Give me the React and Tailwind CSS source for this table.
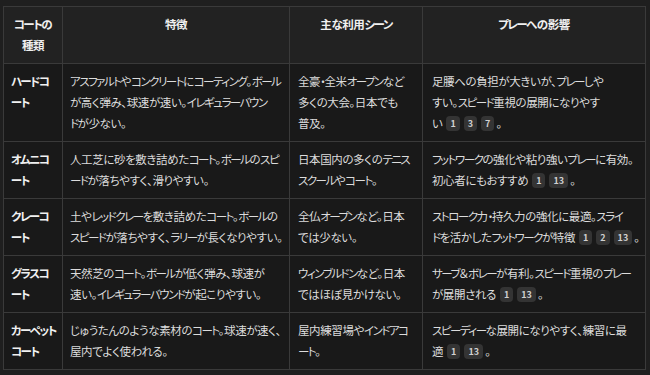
import React from "react";

const heads = [["コートの", "種類"], ["特徴"], ["主な利用シーン"], ["プレーへの影響"]];

const rows = [
  {
    name: ["ハードコ", "ート"],
    feat: ["アスファルトやコンクリートにコーティング。ボール", "が高く弾み、球速が速い。イレギュラーバウン", "ドが少ない。"],
    use: ["全豪・全米オープンなど", "多くの大会。日本でも", "普及。"],
    play: ["足腰への負担が大きいが、プレーしや", "すい。スピード重視の展開になりやす", "い"],
    refs: ["1", "3", "7"],
  },
  {
    name: ["オムニコ", "ート"],
    feat: ["人工芝に砂を敷き詰めたコート。ボールのスピ", "ードが落ちやすく、滑りやすい。"],
    use: ["日本国内の多くのテニス", "スクールやコート。"],
    play: ["フットワークの強化や粘り強いプレーに有効。", "初心者にもおすすめ"],
    refs: ["1", "13"],
  },
  {
    name: ["クレーコ", "ート"],
    feat: ["土やレッドクレーを敷き詰めたコート。ボールの", "スピードが落ちやすく、ラリーが長くなりやすい。"],
    use: ["全仏オープンなど。日本", "では少ない。"],
    play: ["ストローク力・持久力の強化に最適。スライ", "ドを活かしたフットワークが特徴"],
    refs: ["1", "2", "13"],
  },
  {
    name: ["グラスコ", "ート"],
    feat: ["天然芝のコート。ボールが低く弾み、球速が", "速い。イレギュラーバウンドが起こりやすい。"],
    use: ["ウィンブルドンなど。日本", "ではほぼ見かけない。"],
    play: ["サーブ＆ボレーが有利。スピード重視のプレー", "が展開される"],
    refs: ["1", "13"],
  },
  {
    name: ["カーペット", "コート"],
    feat: ["じゅうたんのような素材のコート。球速が速く、", "屋内でよく使われる。"],
    use: ["屋内練習場やインドアコ", "ート。"],
    play: ["スピーディーな展開になりやすく、練習に最", "適"],
    refs: ["1", "13"],
  },
];

// katakana in the screenshot's UI font is much narrower than in Noto, so tighten those runs
function Text({ s }) {
  const parts = s.split(/([\u30A0-\u30FF]+)/);
  return parts.map((p, i) =>
    /^[\u30A0-\u30FF]+$/.test(p) ? (
      <span key={i} className="tracking-[-1.5px]">{p}</span>
    ) : (
      <span key={i}>{p}</span>
    )
  );
}

function Lines({ lines }) {
  return lines.map((l, i) => (
    <div key={i} className="whitespace-nowrap">
      <Text s={l} />
    </div>
  ));
}

function Badge({ n }) {
  return (
    <span className="inline-flex items-center justify-center h-[15px] min-w-[13px] px-[4px] ml-[4px] rounded-[4px] bg-[#343434] text-[9px] font-bold leading-none tracking-normal text-[#d0d0d0] align-[1px]">
      {n}
    </span>
  );
}

export default function App() {
  return (
    <div
      className="w-[650px] h-[375px] bg-[#1f1f1f] pl-[3px] pt-[6px] text-[#dcdcdc] [font-feature-settings:'palt'] overflow-hidden"
      style={{ fontFamily: '"Noto Sans CJK JP", "Noto Sans", sans-serif' }}
    >
      <table className="table-fixed border-collapse w-[642px] text-[11.5px] leading-[21px] tracking-[-0.4px]">
        <colgroup>
          <col className="w-[59px]" />
          <col className="w-[227px]" />
          <col className="w-[133px]" />
          <col className="w-[223px]" />
        </colgroup>
        <thead>
          <tr className="bg-[#222222]">
            {heads.map((h, i) => (
              <th key={i} className="border border-[#3a3a3a] px-2 py-[7px] align-top text-center font-bold text-[#f0f0f0]">
                <Lines lines={h} />
              </th>
            ))}
          </tr>
        </thead>
        <tbody>
          {rows.map((r, i) => (
            <tr key={i} className="bg-[#191919]">
              <td className="border border-[#3a3a3a] pl-[7px] pr-1 py-[7px] align-top font-bold text-[#f0f0f0]">
                <Lines lines={r.name} />
              </td>
              <td className="border border-[#3a3a3a] px-[7px] py-[7px] align-top">
                <Lines lines={r.feat} />
              </td>
              <td className="border border-[#3a3a3a] px-[8px] py-[7px] align-top">
                <Lines lines={r.use} />
              </td>
              <td className="border border-[#3a3a3a] px-[9px] py-[7px] align-top">
                <Lines lines={r.play.slice(0, -1)} />
                <div className="whitespace-nowrap">
                  <Text s={r.play[r.play.length - 1]} />
                  {r.refs.map((n, j) => (
                    <Badge key={j} n={n} />
                  ))}
                  <span className="ml-[2px]">。</span>
                </div>
              </td>
            </tr>
          ))}
        </tbody>
      </table>
    </div>
  );
}
